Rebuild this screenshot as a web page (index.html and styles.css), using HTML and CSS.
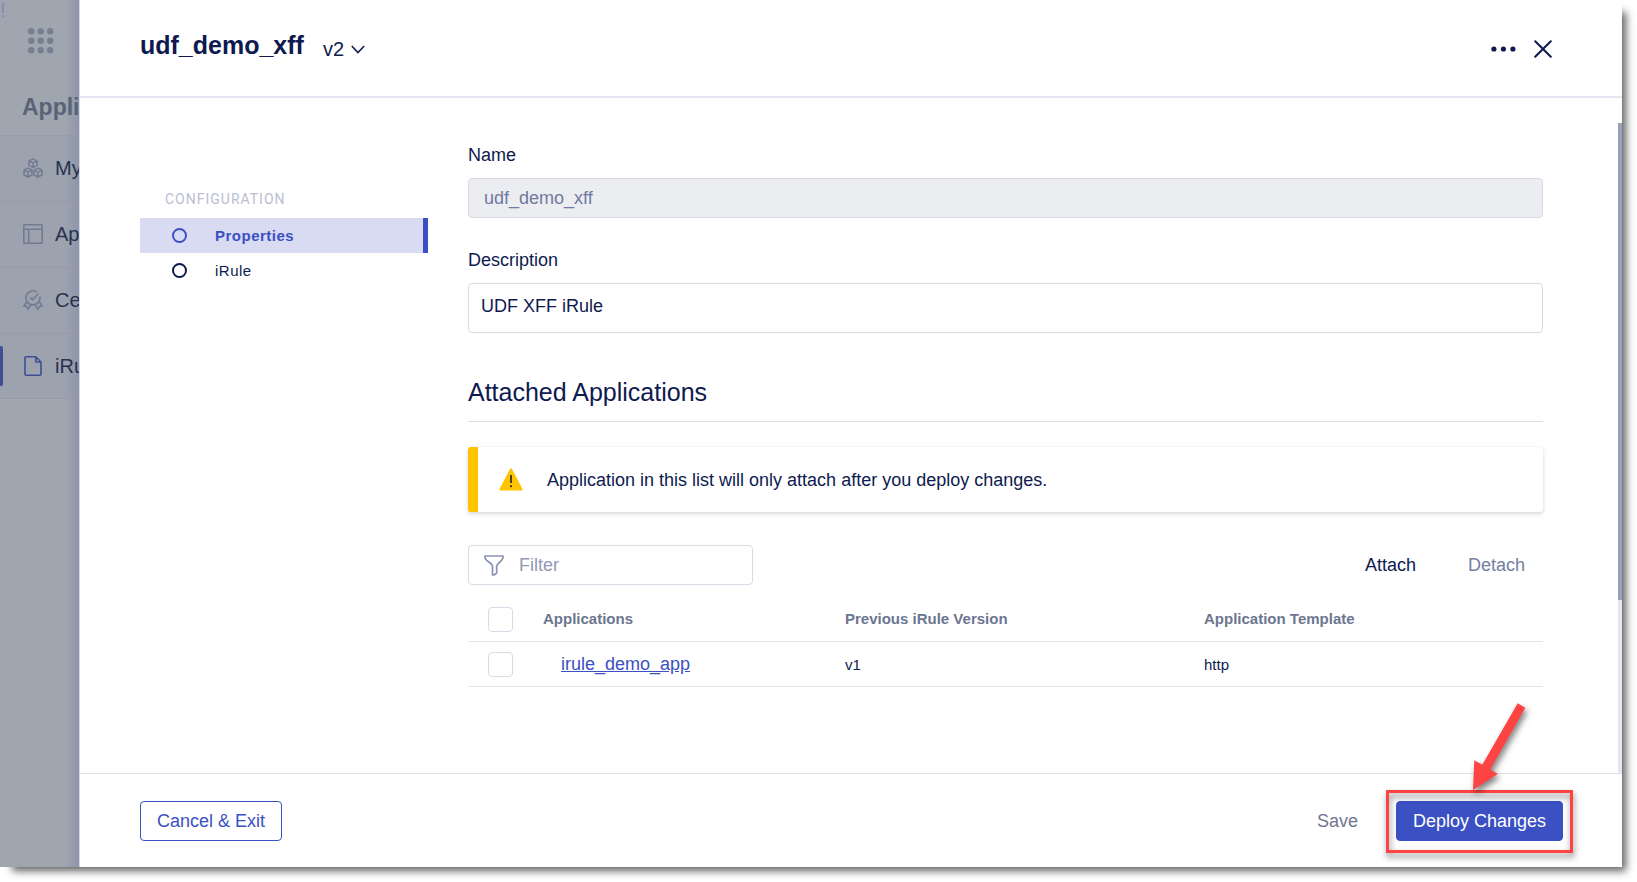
FILE: index.html
```html
<!DOCTYPE html>
<html lang="en">
<head>
<meta charset="utf-8">
<title>udf_demo_xff</title>
<link rel="stylesheet" href="styles.css">
</head>
<body>
<div class="window">
  <aside class="sidebar">
    <span class="sidebar-note">!</span>
    <div class="brand">
      <svg class="grid-icon" width="26" height="26" viewBox="0 0 26 26" fill="#767f90"><circle cx="3.2" cy="3.2" r="3.2"/><circle cx="12.7" cy="3.2" r="3.2"/><circle cx="22.2" cy="3.2" r="3.2"/><circle cx="3.2" cy="12.7" r="3.2"/><circle cx="12.7" cy="12.7" r="3.2"/><circle cx="22.2" cy="12.7" r="3.2"/><circle cx="3.2" cy="22.2" r="3.2"/><circle cx="12.7" cy="22.2" r="3.2"/><circle cx="22.2" cy="22.2" r="3.2"/></svg>
    </div>
    <h2 class="sidebar-title">Appli</h2>
    <nav class="side-nav">
      <a class="side-link" href="#my">
        <svg width="20" height="20" viewBox="0 0 20 20" fill="none" stroke="#737b92" stroke-width="1.5" stroke-linejoin="round"><path d="M10 .8l4 2v4.600l-4 2-4-2V2.800zM6 2.800l4 2 4-2M10 4.800v4.600M5 10.200l4 2v4.800l-4 2-4-2v-4.800zM1 12.200l4 2 4-2M5 14.200V19M15 10.200l4 2v4.800l-4 2-4-2v-4.800zM11 12.200l4 2 4-2M15 14.200V19"/></svg>
        <span>My</span></a>
      <a class="side-link" href="#ap">
        <svg width="20" height="20" viewBox="0 0 20 20" fill="none" stroke="#737b92" stroke-width="1.6"><rect x=".8" y=".8" width="18.400" height="18.400" rx=".8"/><path d="M1 5.200h18M5.700 5.200V19"/></svg>
        <span>Ap</span></a>
      <a class="side-link" href="#ce">
        <svg width="20" height="20" viewBox="0 0 20 20" fill="none" stroke="#737b92" stroke-width="1.600" stroke-linejoin="round"><path d="M13.800 2A7 7 0 1 0 16.800 6.500M7 7.500l2.500 2.300L15.500 3.500M3.800 11.500L.8 16.300l2.700-.1 1.500 3 3.300-4.700M16.200 11.500l3 4.800-2.700-.1-1.500 3-3.300-4.700"/></svg>
        <span>Ce</span></a>
      <a class="side-link active" href="#iru" aria-current="page">
        <svg width="20" height="20" viewBox="0 0 20 20" fill="none" stroke="#3f4f96" stroke-width="1.600" stroke-linejoin="round"><path d="M3 .8h9.800L18 6v12.200a1 1 0 0 1-1 1H3a1 1 0 0 1-1-1V1.800a1 1 0 0 1 1-1zM12.800.8V6H18"/></svg>
        <span>iRu</span></a>
    </nav>
  </aside>

  <section class="panel">
    <header class="panel-header">
      <h1 class="panel-title">udf_demo_xff</h1>
      <button class="version" type="button">v2
        <svg width="14" height="9" viewBox="0 0 14 9" fill="none" stroke="#0e1a4f" stroke-width="1.600"><path d="M.8 1l6.100 6.500L13.200 1"/></svg>
      </button>
      <div class="header-actions">
        <button class="icon-button" type="button" aria-label="More actions"><svg width="25" height="6" viewBox="0 0 25 6" fill="#0e1a4f"><circle cx="2.900" cy="3" r="2.600"/><circle cx="12.400" cy="3" r="2.600"/><circle cx="21.900" cy="3" r="2.600"/></svg></button>
        <button class="icon-button" type="button" aria-label="Close"><svg width="18" height="18" viewBox="0 0 18 18" fill="none" stroke="#0e1a4f" stroke-width="2" stroke-linecap="round"><path d="M1.200 1.200l15.600 15.600M16.800 1.200L1.200 16.800"/></svg></button>
      </div>
    </header>

    <div class="panel-body">
      <nav class="steps">
        <h2 class="steps-title">CONFIGURATION</h2>
        <a class="step active" href="#properties" aria-current="step"><span class="ring"></span>Properties</a>
        <a class="step" href="#irule"><span class="ring"></span>iRule</a>
      </nav>

      <main class="content">
        <label class="label" for="name">Name</label>
        <input class="field" id="name" type="text" value="udf_demo_xff" disabled>
        <label class="label" for="description">Description</label>
        <textarea class="field area" id="description" rows="1">UDF XFF iRule</textarea>

        <h2 class="section-title">Attached Applications</h2>

        <div class="alert" role="status">
          <svg width="24" height="23" viewBox="0 0 24 23"><path d="M11 .9a1.200 1.200 0 0 1 2 0l10.500 20.200a1 1 0 0 1-.9 1.500H1.400a1 1 0 0 1-.9-1.500z" fill="#ffc400"/><path d="M12 7v8" stroke="#1d2142" stroke-width="1.600"/><circle cx="12" cy="18.200" r="1" fill="#1d2142"/></svg>
          <p>Application in this list will only attach after you deploy changes.</p>
        </div>

        <div class="toolbar">
          <label class="filter">
            <svg width="20" height="21" viewBox="0 0 20 21" fill="none" stroke="#8b92b3" stroke-width="1.700" stroke-linejoin="round"><path d="M1 1h18v1.500c0 4-6.300 5-6.300 9V18l-2.700 2H8.500v-8.500C8.500 7.500 1 6.500 1 2.500z"/></svg>
            <input type="text" placeholder="Filter" aria-label="Filter">
          </label>
          <div class="table-actions">
            <button class="text-button" type="button">Attach</button>
            <button class="text-button muted" type="button">Detach</button>
          </div>
        </div>

        <table class="apps">
          <thead>
            <tr><th class="col-check"><input class="check" type="checkbox" aria-label="Select all"></th><th class="col-app">Applications</th><th class="col-version">Previous iRule Version</th><th>Application Template</th></tr>
          </thead>
          <tbody>
            <tr><td><input class="check" type="checkbox" aria-label="Select irule_demo_app"></td><td class="app-name"><a href="#irule_demo_app">irule_demo_app</a></td><td>v1</td><td>http</td></tr>
          </tbody>
        </table>
      </main>

      <div class="track"><div class="thumb"></div></div>
    </div>

    <footer class="panel-footer">
      <button class="button outline" type="button">Cancel &amp; Exit</button>
      <div class="footer-actions">
        <button class="text-button grey" type="button">Save</button>
        <div class="deploy">
          <button class="button primary" type="button">Deploy Changes</button>
          <div class="callout"></div>
          <svg class="arrow" width="70" height="100" viewBox="0 0 70 100"><path d="M10 92L11.300 62.300l8 4.400L54.700 5.300l7.600 4.400-35 61.600 7.400 4.700z" fill="#fe4343"/></svg>
        </div>
      </div>
    </footer>
  </section>
</div>
</body>
</html>
```
FILE: styles.css
```css
* { box-sizing: border-box; }

body {
  margin: 0;
  padding: 0 15px 15px 0;
  background: #fff;
  color: #0e1a4f;
  font: 18px/24px "Liberation Sans", Arial, sans-serif;
}

h1, h2, p { margin: 0; }
button, input, textarea { font: inherit; color: inherit; }
button { border: 0; background: none; padding: 0; cursor: pointer; }
svg { display: block; flex: none; }

.window {
  display: flex;
  min-height: calc(100vh - 15px);
  background: #fff;
  box-shadow: 8px 8px 8px -4px rgba(0, 0, 0, .62);
}

/* Dimmed navigation behind the panel */
.sidebar {
  position: relative;
  flex: none;
  width: 79px;
  background: linear-gradient(to left, #8f95a8, #9fa6af 14px);
}
.sidebar-note { position: absolute; top: -2px; left: 0; color: #8389b3; font-size: 20px; }
.brand { padding: 28px 0 0 28px; }
.sidebar-title {
  height: 81px;
  padding: 39px 0 0 22px;
  color: #596377;
  font-size: 23px;
  line-height: 28px;
}
.side-link {
  position: relative;
  display: flex;
  align-items: center;
  gap: 12px;
  height: 66px;
  padding: 0 0 1px 23px;
  border-top: 1px solid #959ca8;
  background: linear-gradient(to left, #8f95a8, #9ca3af 14px);
  color: #26324f;
  font-size: 20px;
  white-space: nowrap;
  text-decoration: none;
}
.side-link:last-child { border-bottom: 1px solid #959ca8; }
.side-link.active::before {
  content: "";
  position: absolute;
  top: 12px;
  left: 0;
  width: 3px;
  height: 40px;
  border-radius: 0 2px 2px 0;
  background: #3f4f96;
}

.panel {
  position: relative;
  flex: 1;
  min-width: 0;
  display: flex;
  flex-direction: column;
  border-left: 1px solid #d5d8e6;
  background: #fff;
}
.panel-header {
  display: flex;
  align-items: center;
  height: 98px;
  padding: 0 70px 0 60px;
  border-bottom: 2px solid #e4e7f2;
}
.panel-title { padding-bottom: 6px; font-size: 25px; line-height: 32px; }
.version { display: flex; align-items: center; gap: 7px; margin-left: 19px; padding-top: 2px; font-size: 20px; }
.header-actions { display: flex; align-items: center; gap: 18px; margin-left: auto; padding-top: 2px; }

.panel-body { flex: 1; display: flex; }

.steps { flex: none; width: 348px; padding: 89px 0 0 60px; }
.steps-title {
  height: 31px;
  padding-left: 25px;
  color: #b9bed0;
  font: 400 14px/24px Roboto, sans-serif;
  letter-spacing: 1px;
}
.step {
  display: flex;
  align-items: center;
  gap: 28px;
  height: 35px;
  padding-left: 32px;
  color: #0e1a4f;
  font-size: 15px;
  letter-spacing: .5px;
  text-decoration: none;
}
.step.active {
  border-right: 5px solid #3a50c3;
  background: #d8dbf1;
  color: #3a50c3;
  font-weight: bold;
}
.ring { width: 15px; height: 15px; border: 2px solid currentColor; border-radius: 50%; }

.content { flex: 1; min-width: 0; padding: 44px 75px 40px 40px; }
.label { display: block; height: 36px; line-height: 26px; }
.field {
  display: block;
  width: 100%;
  height: 40px;
  margin-bottom: 29px;
  padding: 0 15px;
  border: 1px solid #d9dae6;
  border-radius: 4px;
  background: #fff;
}
.field:disabled { background: #ecedf1; color: #7079a0; }
.area { height: 50px; padding: 10px 12px; resize: none; overflow: hidden; }
.section-title {
  margin-top: 43px;
  padding-bottom: 13px;
  border-bottom: 1px solid #dcdde3;
  font-size: 25px;
  font-weight: normal;
  line-height: 32px;
}
.alert {
  display: flex;
  align-items: center;
  gap: 24px;
  height: 65px;
  margin-top: 25px;
  padding-left: 21px;
  border-left: 10px solid #ffc400;
  border-radius: 3px;
  box-shadow: 0 2px 4px rgba(20, 30, 60, .16), 0 0 1px rgba(20, 30, 60, .12);
}

.toolbar { display: flex; align-items: center; margin-top: 33px; }
.filter {
  display: flex;
  align-items: center;
  gap: 15px;
  width: 285px;
  height: 40px;
  padding: 0 15px;
  border: 1px solid #d9dae6;
  border-radius: 4px;
}
.filter input { flex: 1; min-width: 0; padding: 0; border: 0; outline: 0; }
.filter input::placeholder { color: #9298b5; opacity: 1; }
.table-actions { display: flex; gap: 52px; margin-left: auto; padding-right: 18px; }
.muted { color: #757da3; }
.grey { color: #6e7790; }

.apps {
  width: 100%;
  margin-top: 11px;
  border-collapse: collapse;
  table-layout: fixed;
  font-size: 15px;
}
.apps tr { height: 45px; border-bottom: 1px solid #e4e6ed; }
.apps th, .apps td { padding: 2px 0 0; text-align: left; }
.apps th { color: #6c7690; }
.col-check { width: 75px; }
.col-app { width: 302px; }
.col-version { width: 359px; }
.apps .app-name { padding: 0 0 0 18px; font-size: 18px; }
.app-name a { color: #3a50c3; }
.check {
  display: block;
  width: 25px;
  height: 25px;
  margin: 0 0 0 20px;
  appearance: none;
  border: 1px solid #d9dae6;
  border-radius: 4px;
}

.track { flex: none; width: 4px; margin-top: 25px; background: #e4e7f2; }
.thumb { height: 477px; background: #9aa1bf; }

.panel-footer {
  display: flex;
  align-items: center;
  height: 94px;
  padding: 0 59px 0 60px;
  border-top: 1px solid #e0e2ee;
}
.button { height: 40px; padding: 0 16px; border: 1px solid #3a50c3; border-radius: 4px; white-space: nowrap; }
.outline { color: #3a50c3; }
.primary { background: #3a50c3; color: #fff; }
.footer-actions { display: flex; align-items: center; gap: 38px; margin-left: auto; }

/* Callout drawn over the deploy button */
.deploy { position: relative; }
.callout {
  position: absolute;
  inset: -11px -10px -12px;
  border: 3px solid #fe4343;
  filter: drop-shadow(1px 4px 3px rgba(0, 0, 0, .5));
  pointer-events: none;
}
.arrow {
  position: absolute;
  right: 30px;
  bottom: 43px;
  overflow: visible;
  filter: drop-shadow(2px 4px 3px rgba(0, 0, 0, .5));
  pointer-events: none;
}
```
